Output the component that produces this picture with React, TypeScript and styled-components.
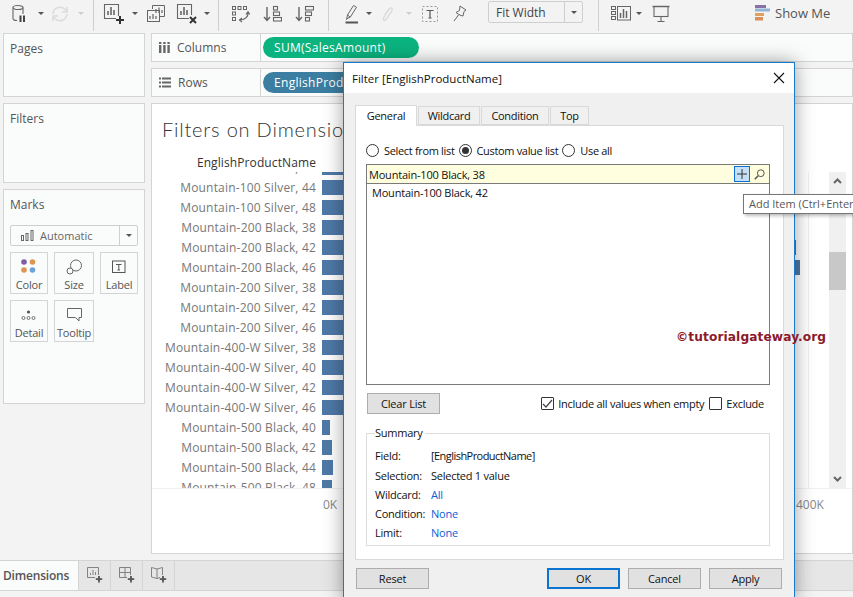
import React from "react";
import styled, { createGlobalStyle } from "styled-components";

const Global = createGlobalStyle`
  html, body { margin: 0; padding: 0; width: 853px; height: 597px; overflow: hidden; background: #f3f3f3; }
  #root { width: 853px; height: 597px; }
  * { box-sizing: border-box; }
`;

const tableauFont = `"Open Sans", "Noto Sans", Arial, sans-serif`;
const winFont = `"Open Sans", "Noto Sans", Arial, sans-serif`;

const Page = styled.div`
  position: relative;
  width: 853px;
  height: 597px;
  overflow: hidden;
  background: #f3f3f3;
  font-family: ${tableauFont};
  display: flex;
  flex-direction: column;
`;

const Toolbar = styled.div`
  height: 33px;
  flex: none;
  display: flex;
  align-items: flex-start;
`;
const Slot = styled.div<{ $w: number }>`
  flex: none;
  width: ${(p) => p.$w}px;
  height: 31px;
  display: flex;
  align-items: center;
  justify-content: flex-start;
  padding-bottom: 4px;
`;
const Sep = styled.div`
  flex: none;
  width: 1px;
  height: 31px;
  background: #cfcfcf;
`;
const Caret = styled.span<{ $dim?: boolean }>`
  width: 0;
  height: 0;
  border-left: 3px solid transparent;
  border-right: 3px solid transparent;
  border-top: 3px solid ${(p) => (p.$dim ? "#cfcfcf" : "#555")};
`;
const FitSelect = styled.div`
  flex: none;
  width: 95px;
  height: 22px;
  margin-top: 1px;
  border: 1px solid #cfcfcf;
  border-radius: 2px;
  display: flex;
  align-items: center;
  font-size: 12px;
  color: #444;
`;
const FitLabel = styled.span`
  flex: 1;
  padding-left: 7px;
`;
const FitArrow = styled.span`
  width: 18px;
  height: 100%;
  border-left: 1px solid #cfcfcf;
  display: flex;
  align-items: center;
  justify-content: center;
`;
const ShowMe = styled.div`
  flex: none;
  display: flex;
  align-items: center;
  gap: 5px;
  height: 26px;
  font-size: 13px;
  color: #555;
`;

const Main = styled.div`
  flex: none;
  height: 527px;
  display: grid;
  grid-template-columns: 142px 1fr;
  column-gap: 6px;
  padding-left: 3px;
`;
const LeftCol = styled.div`
  display: flex;
  flex-direction: column;
  gap: 6px;
`;
const Card = styled.div<{ $h: number }>`
  height: ${(p) => p.$h}px;
  flex: none;
  background: #fafbfb;
  border: 1px solid #d4d4d4;
  padding: 7px 6px;
`;
const CardTitle = styled.div`
  font-size: 12px;
  line-height: 16px;
  color: #555;
`;
const MarkSelect = styled.div`
  margin-top: 12px;
  height: 21px;
  border: 1px solid #cfcfcf;
  border-radius: 2px;
  display: flex;
  align-items: center;
  font-size: 11px;
  color: #666;
  background: #fafbfb;
`;
const MarkSelectLabel = styled.span`
  flex: 1;
  display: flex;
  align-items: center;
  gap: 6px;
  padding-left: 10px;
`;
const MarkSelectArrow = styled.span`
  width: 18px;
  height: 100%;
  border-left: 1px solid #cfcfcf;
  display: flex;
  align-items: center;
  justify-content: center;
`;
const MarkGrid = styled.div`
  margin-top: 6px;
  display: grid;
  grid-template-columns: 38px 40px 38px;
  grid-auto-rows: 42px;
  gap: 6px;
`;
const MarkBtn = styled.div`
  border: 1px solid #d4d4d4;
  display: flex;
  flex-direction: column;
  align-items: center;
  font-size: 11px;
  line-height: 14px;
  color: #555;
  white-space: nowrap;
  letter-spacing: -0.2px;
`;
const MarkIcon = styled.div`
  height: 25px;
  display: flex;
  align-items: center;
  justify-content: center;
  padding-top: 3px;
`;

const RightCol = styled.div`
  display: flex;
  flex-direction: column;
  gap: 6px;
  min-width: 0;
`;
const Shelf = styled.div`
  height: 29px;
  flex: none;
  display: flex;
  background: #fafbfb;
  border: 1px solid #d4d4d4;
`;
const ShelfLabel = styled.div`
  width: 109px;
  flex: none;
  display: flex;
  align-items: center;
  gap: 7px;
  padding-left: 7px;
  border-right: 1px solid #d4d4d4;
  font-size: 12px;
  color: #555;
`;
const ShelfBody = styled.div`
  padding: 3px 2px;
`;
const Pill = styled.div<{ $bg: string; $w: number }>`
  width: ${(p) => p.$w}px;
  height: 21px;
  border-radius: 11px;
  background: ${(p) => p.$bg};
  color: #fff;
  font-size: 12px;
  line-height: 21px;
  padding-left: 11px;
  white-space: nowrap;
  overflow: hidden;
  letter-spacing: 0.3px;
`;
const ChartPanel = styled.div`
  height: 451px;
  flex: none;
  background: #fff;
  border: 1px solid #d4d4d4;
  padding: 13px 0 0 0;
  display: flex;
  flex-direction: column;
`;
const ChartTitle = styled.div`
  padding-left: 10px;
  font-family: "Lato", ${tableauFont};
  font-weight: 300;
  font-size: 20px;
  line-height: 24px;
  color: #333;
  letter-spacing: 0.8px;
  white-space: nowrap;
`;
const RowHeader = styled.div`
  width: 164px;
  margin-top: 14px;
  height: 16px;
  text-align: right;
  font-size: 12px;
  line-height: 16px;
  color: #333;
  white-space: nowrap;
  letter-spacing: 0.1px;
`;
const ChartBody = styled.div`
  margin-top: 1px;
  height: 317px;
  flex: none;
  display: flex;
  border-bottom: 1px solid #f2f2f2;
`;
const RowsViewport = styled.div`
  width: 657px;
  flex: none;
  overflow: hidden;
  position: relative;
  border-right: 1px solid #f0f0f0;
`;
const RowsInner = styled.div`
  margin-top: -14px;
`;
const BarRow = styled.div`
  height: 20px;
  display: flex;
  align-items: flex-start;
  gap: 6px;
`;
const BarLabel = styled.div`
  width: 164px;
  flex: none;
  text-align: right;
  font-size: 12px;
  line-height: 20px;
  color: #777;
  white-space: nowrap;
  letter-spacing: 0.17px;
`;
const Bar = styled.div`
  margin-top: 2px;
  height: 15px;
  background: #4e79a7;
  flex: none;
`;
const Scrollbar = styled.div`
  margin-left: 20px;
  width: 17px;
  flex: none;
  background: #f0f0f0;
  display: flex;
  flex-direction: column;
  align-items: center;
  justify-content: space-between;
  position: relative;
  padding: 6px 0 6px;
`;
const Thumb = styled.div`
  position: absolute;
  left: 0;
  top: 80px;
  width: 17px;
  height: 38px;
  background: #c8c8c8;
`;
const Axis = styled.div`
  position: relative;
  height: 24px;
  font-size: 12px;
  color: #888;
`;
const AxisTick = styled.span<{ $x: number }>`
  position: absolute;
  left: ${(p) => p.$x}px;
  top: 7px;
`;

const BottomBar = styled.div`
  flex: none;
  height: 31px;
  background: #e6e6e6;
  border-top: 1px solid #d4d4d4;
  border-bottom: 1px solid #d4d4d4;
  display: flex;
`;
const SheetTab = styled.div`
  width: 79px;
  flex: none;
  background: #fafbfb;
  border-right: 1px solid #d4d4d4;
  font-size: 12px;
  font-weight: 600;
  color: #555;
  line-height: 29px;
  padding-left: 3px;
  white-space: nowrap;
  letter-spacing: -0.2px;
`;
const NewTab = styled.div`
  width: 32px;
  flex: none;
  border-right: 1px solid #d4d4d4;
  display: flex;
  align-items: center;
  justify-content: center;
  padding-bottom: 2px;
`;

/* dialog */
const Dialog = styled.div`
  position: absolute;
  left: 343px;
  top: 62px;
  width: 452px;
  height: 540px;
  background: #f0f0f0;
  border: 1px solid #1979ca;
  box-shadow: 0 0 18px rgba(0, 0, 0, 0.38);
  font-family: ${winFont};
  font-size: 11px;
  color: #111;
  display: flex;
  flex-direction: column;
`;
const TitleBar = styled.div`
  height: 30px;
  flex: none;
  background: #fff;
  display: flex;
  align-items: center;
  justify-content: space-between;
  padding: 0 9px 0 8px;
  font-size: 11.5px;
`;
const DialogBody = styled.div`
  padding: 11px 10px 0 11px;
  display: flex;
  flex-direction: column;
`;
const Tabs = styled.div`
  display: flex;
  align-items: flex-end;
  height: 21px;
  gap: 1px;
  position: relative;
  z-index: 1;
`;
const Tab = styled.div<{ $active?: boolean; $w: number }>`
  width: ${(p) => p.$w}px;
  height: ${(p) => (p.$active ? 21 : 19)}px;
  margin-bottom: ${(p) => (p.$active ? -1 : 0)}px;
  background: ${(p) => (p.$active ? "#fff" : "#f0f0f0")};
  border: 1px solid #d9d9d9;
  border-bottom: ${(p) => (p.$active ? "none" : "1px solid #d9d9d9")};
  text-align: center;
  line-height: ${(p) => (p.$active ? 19 : 18)}px;
  letter-spacing: -0.3px;
`;
const Panel = styled.div`
  height: 435px;
  flex: none;
  background: #fff;
  border: 1px solid #d9d9d9;
  padding: 16px 13px 0 10px;
  display: flex;
  flex-direction: column;
`;
const RadioRow = styled.div`
  height: 16px;
  display: flex;
  align-items: center;
  letter-spacing: -0.28px;
`;
const RadioOuter = styled.span<{ $on?: boolean }>`
  width: 13px;
  height: 13px;
  flex: none;
  border-radius: 50%;
  border: 1px solid #333;
  display: flex;
  align-items: center;
  justify-content: center;
  &::after {
    content: "";
    width: 7px;
    height: 7px;
    border-radius: 50%;
    background: ${(p) => (p.$on ? "#333" : "transparent")};
  }
`;
const RadioText = styled.span`
  margin: 0 4px 0 5px;
  white-space: nowrap;
  letter-spacing: -0.33px;
`;
const InputBox = styled.div`
  margin-top: 6px;
  height: 20px;
  flex: none;
  border: 1px solid #7a7a7a;
  background: #ffffdf;
  display: flex;
  align-items: center;
  padding-left: 2px;
  letter-spacing: -0.2px;
  position: relative;
`;
const InputText = styled.span`
  flex: 1;
  white-space: nowrap;
`;
const AddBtn = styled.span`
  width: 16px;
  height: 16px;
  background: #c5dff5;
  border: 1px solid #0a6fd6;
  display: flex;
  align-items: center;
  justify-content: center;
  margin-right: 4px;
`;
const SearchBtn = styled.span`
  width: 12px;
  height: 14px;
  display: flex;
  align-items: center;
  margin-right: 3px;
`;
const ListBox = styled.div`
  height: 201px;
  flex: none;
  border: 1px solid #7a7a7a;
  border-top: none;
  padding: 0 0 0 5px;
  line-height: 18px;
  letter-spacing: -0.2px;
  position: relative;
`;
const Watermark = styled.div`
  position: absolute;
  left: 309px;
  top: 144px;
  font-family: "DejaVu Sans", Verdana, sans-serif;
  font-weight: 700;
  font-size: 12.2px;
  line-height: 18px;
  color: #8b1a2b;
  white-space: nowrap;
  letter-spacing: 0.1px;
`;
const Tip = styled.div`
  position: absolute;
  left: 743px;
  top: 194px;
  width: 120px;
  height: 20px;
  background: #fff;
  border: 1px solid #767676;
  box-shadow: 2px 2px 3px rgba(0, 0, 0, 0.25);
  font-size: 11px;
  line-height: 18px;
  padding-left: 5px;
  color: #575757;
  white-space: nowrap;
  overflow: hidden;
`;
const OptionsRow = styled.div`
  margin-top: 8px;
  height: 21px;
  flex: none;
  display: flex;
  align-items: center;
  padding-left: 1px;
  padding-right: 6px;
  letter-spacing: -0.27px;
`;
const WinBtn = styled.div<{ $primary?: boolean }>`
  width: 73px;
  height: 21px;
  flex: none;
  background: #e1e1e1;
  border: ${(p) => (p.$primary ? "2px solid #0a74d1" : "1px solid #adadad")};
  text-align: center;
  line-height: ${(p) => (p.$primary ? 17 : 19)}px;
  letter-spacing: -0.2px;
`;
const CheckBox = styled.span<{ $gap?: number }>`
  width: 13px;
  height: 13px;
  flex: none;
  margin-left: ${(p) => p.$gap ?? 0}px;
  border: 1px solid #333;
  border-radius: 1px;
  display: flex;
  align-items: center;
  justify-content: center;
`;
const CheckLabel = styled.span`
  margin-left: 4px;
  white-space: nowrap;
`;
const Spacer = styled.span`
  flex: 1;
`;
const SummaryBox = styled.fieldset`
  margin: 12px 0 0;
  padding: 6px 0 0 8px;
  height: 120px;
  border: 1px solid #dcdcdc;
  min-width: 0;
  letter-spacing: -0.25px;
`;
const SummaryLegend = styled.legend`
  padding: 0 2px 0 0;
  line-height: 14px;
  font-size: 11px;
`;
const SummaryRow = styled.div`
  display: flex;
  height: 19px;
  line-height: 19px;
  &:first-of-type {
    height: 20px;
  }
`;
const SummaryKey = styled.span`
  width: 56px;
  flex: none;
`;
const SummaryVal = styled.span<{ $link?: boolean; $tight?: boolean }>`
  color: ${(p) => (p.$link ? "#0b5fd8" : "#111")};
  letter-spacing: ${(p) => (p.$tight ? "-0.55px" : "inherit")};
`;
const Footer = styled.div`
  padding: 8px 0 0 12px;
  display: flex;
  gap: 8px;
`;
const FooterGap = styled.span`
  flex: none;
  width: 102px;
`;

const dark = "#666";

const CylinderIcon = () => (
  <svg width="20" height="20" viewBox="0 0 20 20" fill="none" stroke={dark} strokeWidth="1.1">
    <ellipse cx="7" cy="3.5" rx="5" ry="2" />
    <path d="M2 3.5V14.5C2 15.8 4 16.5 6 16.5M12 3.5V10" />
    <path d="M9.5 11.5V18M13 11.5V18" strokeWidth="2" stroke="#444" />
  </svg>
);
const RefreshIcon = () => (
  <svg width="18" height="18" viewBox="0 0 18 18" fill="none" stroke="#dcdcdc" strokeWidth="1.6">
    <path d="M2 9a7 7 0 0 1 12-4.5l2 2M16 9a7 7 0 0 1-12 4.5l-2-2" />
    <path d="M16 2v5h-5M2 16v-5h5" />
  </svg>
);
const NewSheetIcon = () => (
  <svg width="22" height="22" viewBox="0 0 22 22" fill="none" stroke={dark} strokeWidth="1.1">
    <path d="M13 15.5H1.5V1.5H15.5V13" />
    <path d="M5 12V8M8 12V4M11 12V7" strokeWidth="1.6" />
    <path d="M17 13V21M13 17H21" stroke="#333" strokeWidth="2" />
  </svg>
);
const DupIcon = () => (
  <svg width="20" height="20" viewBox="0 0 20 20" fill="none" stroke={dark} strokeWidth="1">
    <path d="M6.5 5V1.5H18.5V12.5H14" />
    <rect x="1.5" y="6.5" width="12" height="11" />
    <path d="M4 15V12M7 15V10M10 15V12M10 9V5M13 9V3.5M16 9V6" strokeWidth="1.2" />
  </svg>
);
const ClearIcon = () => (
  <svg width="22" height="22" viewBox="0 0 22 22" fill="none" stroke={dark} strokeWidth="1.1">
    <path d="M13 15.5H1.5V1.5H15.5V12" />
    <path d="M5 12V8M8 12V4M11 12V7" strokeWidth="1.6" />
    <path d="M14 14L20 20M20 14L14 20" stroke="#333" strokeWidth="2" />
  </svg>
);
const SwapIcon = () => (
  <svg width="18" height="18" viewBox="0 0 18 18" fill="none" stroke={dark} strokeWidth="1">
    <rect x="0.5" y="1.5" width="3" height="3" />
    <rect x="6" y="1.5" width="3" height="3" />
    <rect x="11.5" y="1.5" width="3" height="3" />
    <rect x="0.5" y="7" width="3" height="3" />
    <rect x="0.5" y="12.5" width="3" height="3" />
    <path d="M16 7C16.5 11 14 14.5 8 15M14 9.5L16 6.8L17.8 9.5M10 13L7.5 15L10 17" strokeWidth="1.2" />
  </svg>
);
const SortAscIcon = () => (
  <svg width="19" height="18" viewBox="0 0 19 18" fill="none" stroke={dark} strokeWidth="1.1">
    <path d="M4 2V15M1 12L4 15.5L7 12" strokeWidth="1.4" />
    <rect x="10.5" y="1.5" width="4" height="3.5" />
    <rect x="10.5" y="7" width="6" height="3.5" />
    <rect x="10.5" y="12.5" width="8" height="3.5" />
  </svg>
);
const SortDescIcon = () => (
  <svg width="19" height="18" viewBox="0 0 19 18" fill="none" stroke={dark} strokeWidth="1.1">
    <path d="M4 2V15M1 12L4 15.5L7 12" strokeWidth="1.4" />
    <rect x="10.5" y="1.5" width="8" height="3.5" />
    <rect x="10.5" y="7" width="6" height="3.5" />
    <rect x="10.5" y="12.5" width="4" height="3.5" />
  </svg>
);
const PenIcon = () => (
  <svg width="14" height="20" viewBox="0 0 14 20" fill="none" stroke={dark} strokeWidth="1">
    <path d="M3 14L1.5 15.5L2.5 11L8.5 1.5L11.5 3.3L5 13.5Z" />
    <path d="M2.5 11L5 13" />
    <path d="M0.5 18.5H13" strokeWidth="2" stroke="#555" />
  </svg>
);
const ClipIcon = () => (
  <svg width="12" height="18" viewBox="0 0 12 18" fill="none" stroke="#d8d8d8" strokeWidth="1.3">
    <path d="M2.5 9.5L7.5 2.5C9 1 11 2.5 10 4.5L4 13.5C3 15.5 1 14.5 1.5 12.5L2.5 10" transform="translate(0 1)" />
  </svg>
);
const TextBoxIcon = () => (
  <svg width="18" height="18" viewBox="0 0 18 18" fill="none" stroke="#999" strokeWidth="1">
    <rect x="1.5" y="1.5" width="15" height="15" strokeDasharray="2 2" />
    <path d="M5.5 5.5H12.5M9 5.5V13M7.5 13H10.5" stroke="#555" strokeWidth="1.2" />
  </svg>
);
const PinIcon = () => (
  <svg width="14" height="17" viewBox="0 0 14 17" fill="none" stroke={dark} strokeWidth="1">
    <path d="M7 1L13 5L11 6.5L10 11L8 10.5L5 9L3 7.5L6.5 5.5ZM5.5 10L1 16" />
  </svg>
);
const ShowCardsIcon = () => (
  <svg width="20" height="15" viewBox="0 0 20 15" fill="none" stroke={dark} strokeWidth="1">
    <rect x="0.5" y="0.5" width="4" height="3" />
    <rect x="0.5" y="5.5" width="4" height="3" />
    <rect x="0.5" y="10.5" width="4" height="3" />
    <rect x="6.5" y="0.5" width="13" height="13.5" />
    <path d="M9.5 12V7M12.5 12V3M15.5 12V5" strokeWidth="1.5" />
  </svg>
);
const PresentIcon = () => (
  <svg width="18" height="18" viewBox="0 0 18 18" fill="none" stroke={dark} strokeWidth="1.1">
    <path d="M0.5 1.5H17.5" strokeWidth="1.4" />
    <rect x="2" y="1.5" width="14" height="10" />
    <path d="M9 11.5V16.5M5.5 16.5H12.5" />
  </svg>
);
const ShowMeIcon = () => (
  <svg width="15" height="16" viewBox="0 0 15 16">
    <rect x="0" y="0" width="11" height="3" fill="#8a6fa5" />
    <rect x="0" y="3.5" width="15" height="3" fill="#8fb4d6" />
    <rect x="0" y="8" width="9" height="3" fill="#e0a060" />
    <rect x="0" y="12" width="8" height="3.5" fill="#d9905a" />
  </svg>
);
const ColumnsIcon = () => (
  <svg width="11" height="11" viewBox="0 0 11 11" fill="#666">
    <rect x="0" y="3" width="2.4" height="8" />
    <rect x="0" y="0" width="2.4" height="2" />
    <rect x="4.2" y="3" width="2.4" height="8" />
    <rect x="4.2" y="0" width="2.4" height="2" />
    <rect x="8.4" y="3" width="2.4" height="8" />
    <rect x="8.4" y="0" width="2.4" height="2" />
  </svg>
);
const RowsIcon = () => (
  <svg width="12" height="11" viewBox="0 0 12 11" fill="#666">
    <rect x="0" y="0.5" width="2" height="2" />
    <rect x="3" y="0.5" width="9" height="2" />
    <rect x="0" y="4.5" width="2" height="2" />
    <rect x="3" y="4.5" width="9" height="2" />
    <rect x="0" y="8.5" width="2" height="2" />
    <rect x="3" y="8.5" width="9" height="2" />
  </svg>
);
const AutoIcon = () => (
  <svg width="13" height="11" viewBox="0 0 13 11" fill="none" stroke="#666" strokeWidth="1">
    <rect x="0.5" y="5.5" width="2" height="5" />
    <rect x="5" y="3.5" width="2" height="7" />
    <rect x="10" y="0.5" width="2" height="10" />
  </svg>
);
const ColorIcon = () => (
  <svg width="16" height="16" viewBox="0 0 16 16">
    <circle cx="3" cy="3" r="2.8" fill="#7b5fa3" />
    <circle cx="11.5" cy="3" r="2.8" fill="#dd9550" />
    <circle cx="3" cy="11" r="2.8" fill="#dd9550" />
    <circle cx="11.5" cy="11" r="2.8" fill="#6da3d8" />
  </svg>
);
const SizeIcon = () => (
  <svg width="17" height="16" viewBox="0 0 17 16" fill="none" stroke="#666" strokeWidth="1">
    <circle cx="10" cy="6.5" r="5.5" />
    <circle cx="4" cy="12" r="3" fill="#fafbfb" />
  </svg>
);
const LabelIcon = () => (
  <svg width="14" height="14" viewBox="0 0 14 14" fill="none" stroke="#555" strokeWidth="1">
    <rect x="0.5" y="1" width="12.5" height="11.5" />
    <path d="M4 4.5H9.5M6.8 4.5V10M5.5 10H8" />
  </svg>
);
const DetailIcon = () => (
  <svg width="16" height="11" viewBox="0 0 16 11" fill="none" stroke="#666" strokeWidth="0.9">
    <circle cx="7.5" cy="2" r="1.6" fill="#555" stroke="none" />
    <circle cx="2.5" cy="8" r="1.5" />
    <circle cx="7.5" cy="8" r="1.5" />
    <circle cx="12.5" cy="8" r="1.5" />
  </svg>
);
const TooltipIcon = () => (
  <svg width="15" height="14" viewBox="0 0 15 14" fill="none" stroke="#666" strokeWidth="1">
    <path d="M0.5 0.5H14.5V9.5H12V13L8.5 9.5H0.5Z" />
  </svg>
);
const SheetPlusIcon = () => (
  <svg width="16" height="16" viewBox="0 0 16 16" fill="none" stroke="#777" strokeWidth="0.9">
    <path d="M8 10.5H0.5V0.5H11.5V8" />
    <path d="M3.5 8V6M6 8V3M8.5 8V5" />
    <path d="M12 9V15.5M8.8 12.2H15.2" stroke="#555" strokeWidth="1.8" />
  </svg>
);
const DashPlusIcon = () => (
  <svg width="16" height="16" viewBox="0 0 16 16" fill="none" stroke="#777" strokeWidth="0.9">
    <path d="M8 10.5H0.5V0.5H11.5V8M0.5 5.5H11.5M6 0.5V10.5" />
    <path d="M12 9V15.5M8.8 12.2H15.2" stroke="#555" strokeWidth="1.8" />
  </svg>
);
const StoryPlusIcon = () => (
  <svg width="16" height="16" viewBox="0 0 16 16" fill="none" stroke="#777" strokeWidth="0.9">
    <path d="M6 2L0.5 0.5V10L6 11.5L9 10.5M6 2L11.5 0.5V8M6 2V11.5" />
    <path d="M12 9V15.5M8.8 12.2H15.2" stroke="#555" strokeWidth="1.8" />
  </svg>
);

const rows: [string, number][] = [
  ["Mountain-100 Silver, 42", 300],
  ["Mountain-100 Silver, 44", 300],
  ["Mountain-100 Silver, 48", 300],
  ["Mountain-200 Black, 38", 300],
  ["Mountain-200 Black, 42", 474],
  ["Mountain-200 Black, 46", 478],
  ["Mountain-200 Silver, 38", 300],
  ["Mountain-200 Silver, 42", 300],
  ["Mountain-200 Silver, 46", 300],
  ["Mountain-400-W Silver, 38", 300],
  ["Mountain-400-W Silver, 40", 300],
  ["Mountain-400-W Silver, 42", 300],
  ["Mountain-400-W Silver, 46", 300],
  ["Mountain-500 Black, 40", 8],
  ["Mountain-500 Black, 42", 10],
  ["Mountain-500 Black, 44", 11],
  ["Mountain-500 Black, 48", 10],
];

const summary: [string, string, boolean, boolean][] = [
  ["Field:", "[EnglishProductName]", false, true],
  ["Selection:", "Selected 1 value", false, false],
  ["Wildcard:", "All", true, false],
  ["Condition:", "None", true, false],
  ["Limit:", "None", true, false],
];

export default function App() {
  return (
    <Page>
      <Global />
      <Toolbar>
        <Slot $w={11} />
        <Slot $w={27}><CylinderIcon /></Slot>
        <Slot $w={13}><Caret /></Slot>
        <Slot $w={27}><RefreshIcon /></Slot>
        <Slot $w={15}><Caret $dim /></Slot>
        <Sep />
        <Slot $w={9} />
        <Slot $w={29}><NewSheetIcon /></Slot>
        <Slot $w={14}><Caret /></Slot>
        <Slot $w={30}><DupIcon /></Slot>
        <Slot $w={28}><ClearIcon /></Slot>
        <Slot $w={14}><Caret /></Slot>
        <Sep />
        <Slot $w={13} />
        <Slot $w={31}><SwapIcon /></Slot>
        <Slot $w={32}><SortAscIcon /></Slot>
        <Slot $w={33}><SortDescIcon /></Slot>
        <Sep />
        <Slot $w={16} />
        <Slot $w={21}><PenIcon /></Slot>
        <Slot $w={16}><Caret /></Slot>
        <Slot $w={24}><ClipIcon /></Slot>
        <Slot $w={15}><Caret $dim /></Slot>
        <Slot $w={32}><TextBoxIcon /></Slot>
        <Slot $w={35}><PinIcon /></Slot>
        <FitSelect>
          <FitLabel>Fit Width</FitLabel>
          <FitArrow><Caret /></FitArrow>
        </FitSelect>
        <Slot $w={15} />
        <Sep />
        <Slot $w={12} />
        <Slot $w={25}><ShowCardsIcon /></Slot>
        <Slot $w={16}><Caret /></Slot>
        <Slot $w={103}><PresentIcon /></Slot>
        <ShowMe><ShowMeIcon />Show Me</ShowMe>
      </Toolbar>
      <Main>
        <LeftCol>
          <Card $h={64}><CardTitle>Pages</CardTitle></Card>
          <Card $h={80}><CardTitle>Filters</CardTitle></Card>
          <Card $h={215}>
            <CardTitle>Marks</CardTitle>
            <MarkSelect>
              <MarkSelectLabel><AutoIcon />Automatic</MarkSelectLabel>
              <MarkSelectArrow><Caret /></MarkSelectArrow>
            </MarkSelect>
            <MarkGrid>
              <MarkBtn><MarkIcon><ColorIcon /></MarkIcon>Color</MarkBtn>
              <MarkBtn><MarkIcon><SizeIcon /></MarkIcon>Size</MarkBtn>
              <MarkBtn><MarkIcon><LabelIcon /></MarkIcon>Label</MarkBtn>
              <MarkBtn><MarkIcon><DetailIcon /></MarkIcon>Detail</MarkBtn>
              <MarkBtn><MarkIcon><TooltipIcon /></MarkIcon>Tooltip</MarkBtn>
            </MarkGrid>
          </Card>
        </LeftCol>
        <RightCol>
          <Shelf>
            <ShelfLabel><ColumnsIcon />Columns</ShelfLabel>
            <ShelfBody><Pill $bg="#0bb37f" $w={156}>SUM(SalesAmount)</Pill></ShelfBody>
          </Shelf>
          <Shelf>
            <ShelfLabel><RowsIcon />Rows</ShelfLabel>
            <ShelfBody><Pill $bg="#3b7ea1" $w={160}>EnglishProductName</Pill></ShelfBody>
          </Shelf>
          <ChartPanel>
            <ChartTitle>Filters on Dimensions</ChartTitle>
            <RowHeader>EnglishProductName</RowHeader>
            <ChartBody>
              <RowsViewport>
                <RowsInner>
                  {rows.map(([name, w]) => (
                    <BarRow key={name}>
                      <BarLabel>{name}</BarLabel>
                      <Bar style={{ width: w }} />
                    </BarRow>
                  ))}
                </RowsInner>
              </RowsViewport>
              <Scrollbar>
                <svg width="9" height="6" viewBox="0 0 9 6" fill="none" stroke="#666" strokeWidth="2"><path d="M1 5L4.5 1.5L8 5" /></svg>
                <Thumb />
                <svg width="9" height="6" viewBox="0 0 9 6" fill="none" stroke="#666" strokeWidth="2"><path d="M1 1L4.5 4.5L8 1" /></svg>
              </Scrollbar>
            </ChartBody>
            <Axis>
              <AxisTick $x={171}>0K</AxisTick>
              <AxisTick $x={644}>400K</AxisTick>
            </Axis>
          </ChartPanel>
        </RightCol>
      </Main>
      <BottomBar>
        <SheetTab>Dimensions</SheetTab>
        <NewTab><SheetPlusIcon /></NewTab>
        <NewTab><DashPlusIcon /></NewTab>
        <NewTab><StoryPlusIcon /></NewTab>
      </BottomBar>
      <Dialog>
        <TitleBar>
          Filter [EnglishProductName]
          <svg width="12" height="12" viewBox="0 0 12 12" fill="none" stroke="#111" strokeWidth="1.1"><path d="M1 1L11 11M11 1L1 11" /></svg>
        </TitleBar>
        <DialogBody>
          <Tabs>
            <Tab $active $w={62}>General</Tab>
            <Tab $w={62}>Wildcard</Tab>
            <Tab $w={68}>Condition</Tab>
            <Tab $w={39}>Top</Tab>
          </Tabs>
          <Panel>
            <RadioRow>
              <RadioOuter /><RadioText>Select from list</RadioText>
              <RadioOuter $on /><RadioText>Custom value list</RadioText>
              <RadioOuter /><RadioText>Use all</RadioText>
            </RadioRow>
            <InputBox>
              <InputText>Mountain-100 Black, 38</InputText>
              <AddBtn>
                <svg width="10" height="10" viewBox="0 0 10 10" stroke="#333" strokeWidth="1"><path d="M5 0V10M0 5H10" /></svg>
              </AddBtn>
              <SearchBtn>
                <svg width="11" height="11" viewBox="0 0 11 11" fill="none" stroke="#555" strokeWidth="1"><circle cx="6.8" cy="4.2" r="3.4" /><path d="M4.2 6.8L0.8 10.2" strokeWidth="1.5" /></svg>
              </SearchBtn>
            </InputBox>
            <ListBox>
              Mountain-100 Black, 42
              <Watermark>©tutorialgateway.org</Watermark>
            </ListBox>
            <OptionsRow>
              <WinBtn>Clear List</WinBtn>
              <Spacer />
              <CheckBox>
                <svg width="11" height="10" viewBox="0 0 11 10" fill="none" stroke="#444" strokeWidth="1.2"><path d="M1 5L4 8L10 1" /></svg>
              </CheckBox>
              <CheckLabel>Include all values when empty</CheckLabel>
              <CheckBox $gap={5} />
              <CheckLabel>Exclude</CheckLabel>
            </OptionsRow>
            <SummaryBox>
              <SummaryLegend>Summary</SummaryLegend>
              {summary.map(([k, v, link, tight]) => (
                <SummaryRow key={k}>
                  <SummaryKey>{k}</SummaryKey>
                  <SummaryVal $link={link} $tight={tight}>{v}</SummaryVal>
                </SummaryRow>
              ))}
            </SummaryBox>
          </Panel>
        </DialogBody>
        <Footer>
          <WinBtn>Reset</WinBtn>
          <FooterGap />
          <WinBtn $primary>OK</WinBtn>
          <WinBtn>Cancel</WinBtn>
          <WinBtn>Apply</WinBtn>
        </Footer>
      </Dialog>
      <Tip>Add Item (Ctrl+Enter)</Tip>
    </Page>
  );
}
